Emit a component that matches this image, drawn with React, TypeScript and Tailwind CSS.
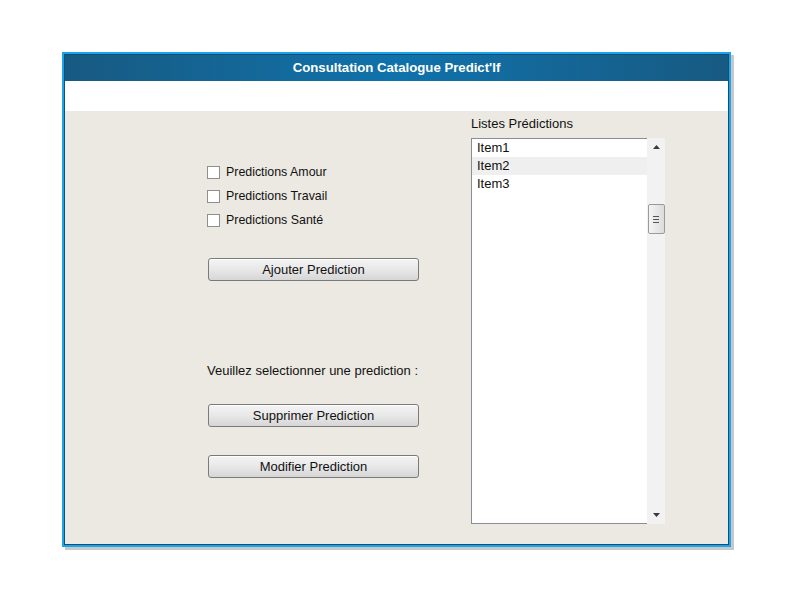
import { useState } from "react"

const font = { fontFamily: '"Liberation Sans", Arial, sans-serif' }

function Checkbox({ label }: { label: string }) {
  return (
    <label className="flex items-center h-6 gap-[6px] text-[12.4px] text-[#111]">
      <span className="w-[13px] h-[13px] border border-[#8f8f8f] bg-white" />
      {label}
    </label>
  )
}

function Button({ label }: { label: string }) {
  return (
    <button className="w-[211px] h-[23px] rounded-[3px] border border-[#7a7a7a] bg-gradient-to-b from-[#f4f4f4] via-[#e8e8e8] to-[#d6d6d6] text-[13px] text-[#111] shadow-[inset_0_1px_0_#ffffff]">
      {label}
    </button>
  )
}

export default function App() {
  const [items] = useState(["Item1", "Item2", "Item3"])

  return (
    <div className="w-[800px] h-[600px] bg-white pt-[52px] pl-[62px]" style={font}>
      {/* Window */}
      <div className="w-[669px] h-[495px] border-2 border-[#1ca3ea] shadow-[3px_3px_0_#c8c8c8]">
        <div className="h-full border border-[#0f4f78] flex flex-col">
          {/* Title bar */}
          <div className="h-[26px] pb-px flex items-center justify-center bg-gradient-to-r from-[#175a82] via-[#0f72ab] to-[#175a82] text-white text-[13.2px] font-bold">
            Consultation Catalogue Predict'If
          </div>
          <div className="h-[30px] bg-white" />

          {/* Content */}
          <div className="flex-1 bg-[#ece9e2] flex">
            {/* Left column */}
            <div className="w-[406px] pl-[142px] pt-[49px] flex flex-col">
              <Checkbox label="Predictions Amour" />
              <Checkbox label="Predictions Travail" />
              <Checkbox label="Predictions Santé" />
              <div className="mt-[25px] ml-px">
                <Button label="Ajouter Prediction" />
              </div>
              <div className="mt-[80px] text-[13px] text-[#111]">
                Veuillez selectionner une prediction :
              </div>
              <div className="mt-[22px] ml-px">
                <Button label="Supprimer Prediction" />
              </div>
              <div className="mt-[27px] ml-px">
                <Button label="Modifier Prediction" />
              </div>
            </div>

            {/* Right column */}
            <div className="flex flex-col pt-[3px]">
              <div className="text-[13px] text-[#111] h-[24px]">Listes Prédictions</div>
              <div className="flex h-[386px]">
                <div className="w-[176px] bg-white border border-[#8a8e94] border-r-0">
                  {items.map((it, i) => (
                    <div
                      key={it}
                      className={`h-[18px] pl-[5px] text-[13px] leading-[18px] text-[#111] ${i === 1 ? "bg-[#efefef]" : ""}`}
                    >
                      {it}
                    </div>
                  ))}
                </div>
                <div className="w-[18px] bg-[#f2f2f2] flex flex-col items-center">
                  <div className="h-[18px] flex items-center justify-center">
                    <svg width="7" height="4" viewBox="0 0 7 4">
                      <path d="M3.5 0 L7 4 L0 4 Z" fill="#3a3a3a" />
                    </svg>
                  </div>
                  <div className="mt-[48px] w-[17px] h-[30px] rounded-[2px] border border-[#9a9a9a] bg-gradient-to-r from-[#f4f4f4] to-[#dcdcdc] flex flex-col items-center justify-center gap-[2px]">
                    <span className="w-[6px] h-px bg-[#555]" />
                    <span className="w-[6px] h-px bg-[#555]" />
                    <span className="w-[6px] h-px bg-[#555]" />
                  </div>
                  <div className="flex-1" />
                  <div className="h-[18px] flex items-center justify-center">
                    <svg width="7" height="4" viewBox="0 0 7 4">
                      <path d="M0 0 L7 0 L3.5 4 Z" fill="#3a3a3a" />
                    </svg>
                  </div>
                </div>
              </div>
            </div>
          </div>
        </div>
      </div>
    </div>
  )
}
